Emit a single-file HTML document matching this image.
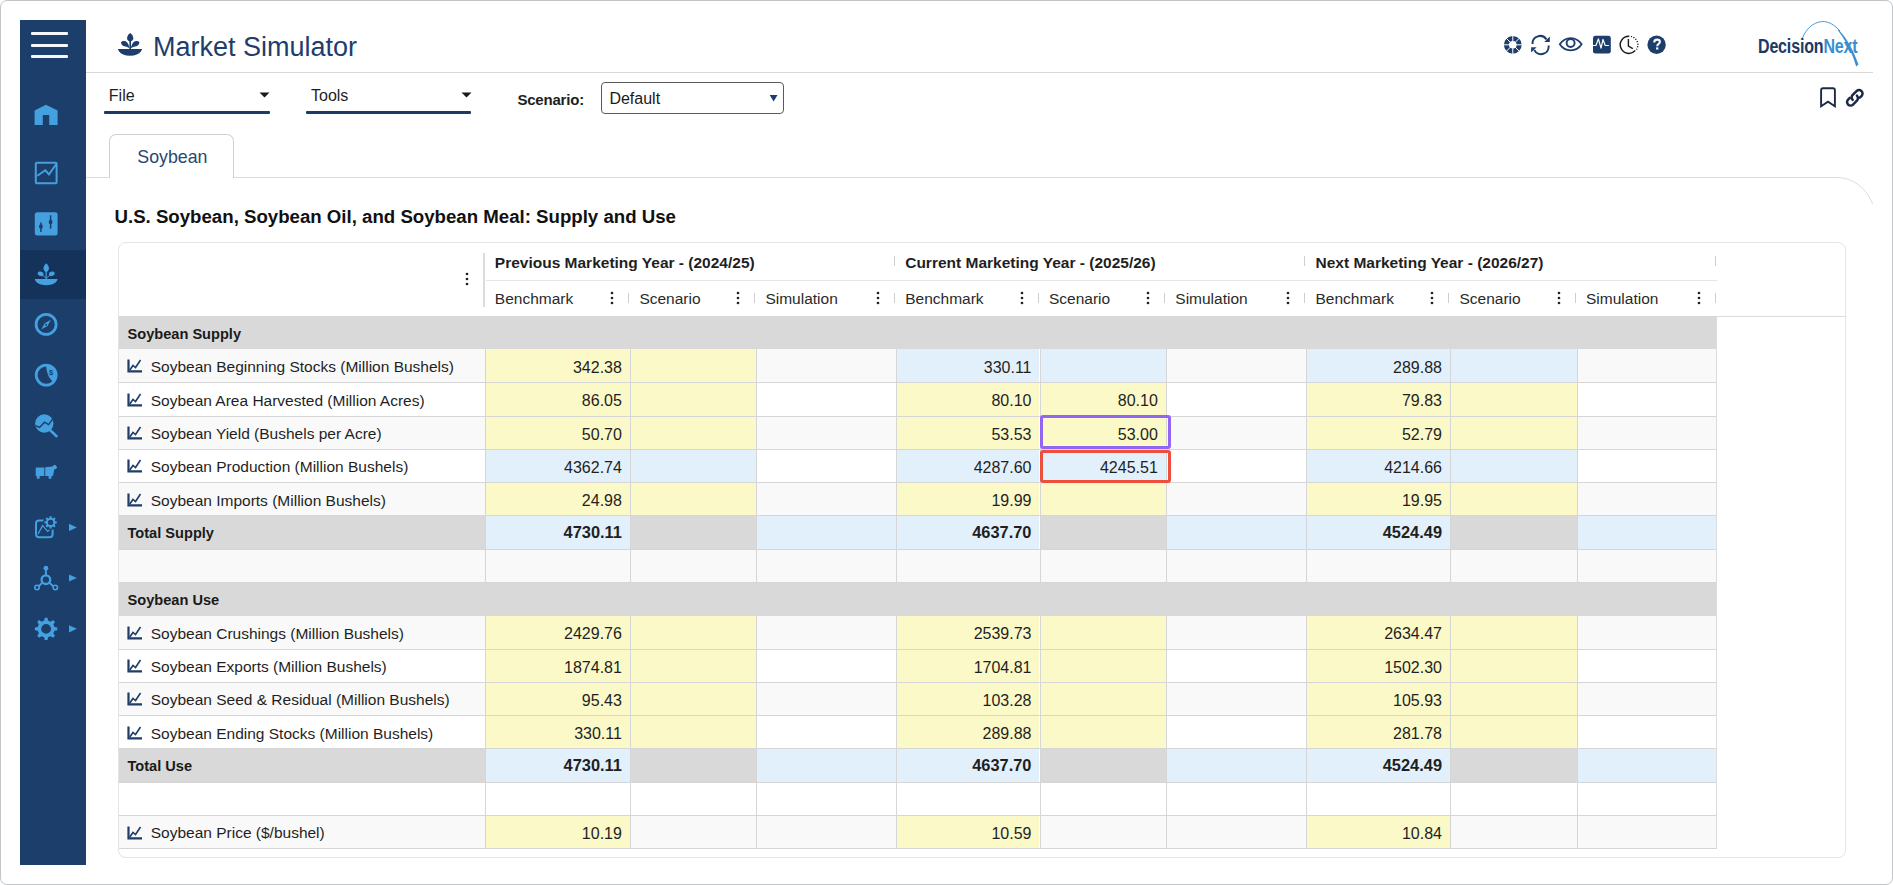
<!DOCTYPE html><html><head><meta charset="utf-8"><style>
*{box-sizing:border-box;margin:0;padding:0}
html,body{width:1893px;height:885px;overflow:hidden;background:#fff;font-family:"Liberation Sans", sans-serif;}
.a{position:absolute}
.t{position:absolute;white-space:nowrap;line-height:1}
.c{position:absolute;overflow:hidden}
</style></head><body><div class="a" style="left:0;top:0;width:1893px;height:885px;border:1px solid #c2c5c8;border-radius:7px"></div>
<div class="a" style="left:20px;top:20px;width:66px;height:845px;background:#1b3e6b"></div>
<div class="a" style="left:80px;top:20px;width:6px;height:845px;background:#1f3e68"></div>
<div class="a" style="left:30.5px;top:31.7px;width:37px;height:3px;background:#f3f7fb;border-radius:1px"></div>
<div class="a" style="left:30.5px;top:43.5px;width:37px;height:3px;background:#f3f7fb;border-radius:1px"></div>
<div class="a" style="left:30.5px;top:54.8px;width:37px;height:3px;background:#f3f7fb;border-radius:1px"></div>
<div class="a" style="left:20px;top:249.5px;width:66px;height:49px;background:#15325a"></div>
<svg class="a" style="left:112px;top:28px" width="36" height="32" viewBox="112 28 36 32">
<path fill="#1d3e6c" d="M117.8 48.9 H142.2 L141 51.3 C139 54.3 135.5 55.7 130 55.7 C124.5 55.7 121 54.3 119 51.3Z"/>
<path fill="#1d3e6c" d="M130.2 33.1 C132.4 34.6 133.3 36.6 133.3 38.3 C133.3 40.2 131.9 41.6 130.2 41.6 C128.5 41.6 127.1 40.2 127.1 38.3 C127.1 36.6 128 34.6 130.2 33.1Z"/>
<rect x="129.4" y="40.5" width="1.6" height="8.6" fill="#1d3e6c"/>
<path fill="#1d3e6c" d="M121 42.2 C122.3 40.8 125.2 40.6 127 42.3 C128 43.3 128.9 45.3 129.6 48.2 C127.6 46.8 125.6 46.5 124.2 46.2 C122.2 45.6 121.2 44.2 121 42.2Z"/>
<path fill="#1d3e6c" d="M139.4 42.2 C138.1 40.8 135.2 40.6 133.4 42.3 C132.4 43.3 131.5 45.3 130.8 48.2 C132.8 46.8 134.8 46.5 136.2 46.2 C138.2 45.6 139.2 44.2 139.4 42.2Z"/>
</svg>
<div class="t" style="left:153px;top:33.64px;font-size:27px;line-height:27px;color:#1d3e6c;font-weight:400;">Market Simulator</div>
<div class="a" style="left:86px;top:72px;width:1787px;height:1px;background:#d8d8d8"></div>
<svg class="a" style="left:1500px;top:33px" width="170" height="24" viewBox="1500 33 170 24">
<circle cx="1512.8" cy="44.8" r="6.35" fill="none" stroke="#1d3e6c" stroke-width="5.1"/>
<g stroke="#fff" stroke-width="1"><line x1="1522.80" y1="44.80" x2="1502.80" y2="44.80"/><line x1="1519.87" y1="51.87" x2="1505.73" y2="37.73"/><line x1="1512.80" y1="54.80" x2="1512.80" y2="34.80"/><line x1="1505.73" y1="51.87" x2="1519.87" y2="37.73"/></g>
<g fill="none" stroke="#1d3e6c" stroke-width="2" stroke-linecap="butt">
 <path d="M1532.5 44 A7.6 7.6 0 0 1 1546.5 39.5"/>
 <path d="M1548.6 45.5 A7.6 7.6 0 0 1 1534.3 50"/>
</g>
<path fill="#1d3e6c" d="M1549.8 36.6 V41.9 H1544.3 Z"/>
<path fill="#1d3e6c" d="M1531.1 52.6 V47.2 H1536.6 Z"/>
<path d="M1559.8 44.3 C1562.6 40 1566.4 38.1 1570.7 38.1 C1575 38.1 1578.8 40 1581.6 44.3 C1578.8 48.5 1575 50.4 1570.7 50.4 C1566.4 50.4 1562.6 48.5 1559.8 44.3Z" fill="none" stroke="#1d3e6c" stroke-width="1.8"/>
<circle cx="1570.6" cy="43" r="4" fill="none" stroke="#1d3e6c" stroke-width="1.9"/>
<rect x="1593" y="35.8" width="17.8" height="17.8" rx="2.4" fill="#1d3e6c"/>
<path d="M1593 45.5 H1595.9 L1598.4 38.9 L1601 48.2 L1603 39.4 L1605.2 45.5 H1608.9" fill="none" stroke="#fff" stroke-width="1.2" stroke-linejoin="round"/>
<path d="M1629.3 36.2 A8.6 8.6 0 1 0 1635.2 50.6" fill="none" stroke="#1c1c1c" stroke-width="1.5"/>
<path d="M1631 36.4 A8.6 8.6 0 0 1 1636.5 49.5" fill="none" stroke="#1c1c1c" stroke-width="1.4" stroke-dasharray="1.1 1.5"/>
<path d="M1628.4 39 V46.2 L1632.8 48.6" fill="none" stroke="#1c1c1c" stroke-width="1.4"/>
<circle cx="1656.6" cy="44.8" r="9.2" fill="#1d3e6c"/>
<path d="M1654.2 42.4 C1654.2 40.4 1655.4 39.6 1657.1 39.6 C1658.9 39.6 1659.9 40.6 1659.9 41.9 C1659.9 43.7 1657.2 44 1657.2 46.3" fill="none" stroke="#f4f8ff" stroke-width="2.1"/><rect x="1656" y="47.4" width="2.4" height="2.1" fill="#f4f8ff"/>
</svg>
<svg class="a" style="left:1750px;top:18px" width="115" height="52" viewBox="1750 18 115 52">
<path d="M1802.5 38 C1806 29 1813 22.5 1821.5 21.6 C1829 21 1835 25.5 1840 31" fill="none" stroke="#3b8fd0" stroke-width="0.9"/>
<path d="M1838 29 C1846 37 1852 48 1855.3 56.5 L1858.5 64.5 L1856.2 66.5 L1853.2 57.5 C1849.5 48 1844 38.5 1838.2 30.8Z" fill="#3b8fd0"/>
</svg>
<div class="t" style="left:1757.5px;top:36.2px;font-size:20.9px;line-height:20.9px;font-weight:700;transform:scaleX(0.765);transform-origin:0 0;letter-spacing:-0.2px"><span style="color:#1b3a66">Decision</span><span style="color:#3b8fd0">Next</span></div>
<div class="t" style="left:108.8px;top:88.46px;font-size:16px;line-height:16px;color:#1e1e1e;font-weight:400;">File</div>
<div class="a" style="left:104.3px;top:110.9px;width:165.7px;height:2.9px;background:#1c3a66;border-radius:1px"></div>
<svg class="a" style="left:259px;top:91px" width="12" height="8"><path d="M0.5 1.5 H10.5 L5.5 6.5Z" fill="#1a1a1a"/></svg>
<div class="t" style="left:311px;top:88.46px;font-size:16px;line-height:16px;color:#1e1e1e;font-weight:400;">Tools</div>
<div class="a" style="left:305.7px;top:110.9px;width:165.8px;height:2.9px;background:#1c3a66;border-radius:1px"></div>
<svg class="a" style="left:460.5px;top:91px" width="12" height="8"><path d="M0.5 1.5 H10.5 L5.5 6.5Z" fill="#1a1a1a"/></svg>
<div class="t" style="left:517.4px;top:91.70px;font-size:15px;line-height:15px;color:#1e1e1e;font-weight:700;letter-spacing:-0.2px">Scenario:</div>
<div class="a" style="left:601px;top:82.2px;width:183px;height:32.2px;border:1.3px solid #5a5a5a;border-radius:4px;background:#fff"></div>
<div class="t" style="left:609.4px;top:90.86px;font-size:16px;line-height:16px;color:#1a1a1a;font-weight:400;">Default</div>
<svg class="a" style="left:769px;top:94px" width="10" height="9"><path d="M0.7 1 H8.5 L4.6 7.6Z" fill="#1d3e6c"/></svg>
<svg class="a" style="left:1815px;top:84px" width="52" height="28" viewBox="1815 84 52 28">
<path d="M1821.1 106.3 V90.2 Q1821.1 88.2 1823.1 88.2 H1832.9 Q1834.9 88.2 1834.9 90.2 V106.3 L1828 101.6 Z" fill="none" stroke="#1c2a44" stroke-width="1.9" stroke-linejoin="miter"/>
<g transform="translate(1854.8 97.8) rotate(-45)" fill="none" stroke="#1c2a44" stroke-width="2.5" stroke-linecap="round">
<path d="M-3 0 A3.5 3.5 0 0 1 0.5 -3.5 L6 -3.5 A3.5 3.5 0 0 1 6 3.5 L3.6 3.5"/>
<path d="M3 0 A3.5 3.5 0 0 1 -0.5 3.5 L-6 3.5 A3.5 3.5 0 0 1 -6 -3.5 L-3.6 -3.5"/>
</g>
</svg>
<div class="a" style="left:86px;top:177px;width:1750px;height:1px;background:#dcdcdc"></div>
<svg class="a" style="left:1830px;top:176px" width="50" height="35" viewBox="1830 176 50 35"><path d="M1830 177.5 H1836 C1852 177.5 1866 187 1872.6 204" fill="none" stroke="#dcdcdc" stroke-width="1"/></svg>
<div class="a" style="left:108.5px;top:134px;width:125.5px;height:44px;border:1px solid #cdd1d4;border-bottom:none;border-radius:7px 7px 0 0;background:#fff"></div>
<div class="t" style="left:137.3px;top:148.53px;font-size:17.8px;line-height:17.8px;color:#2a4770;font-weight:400;">Soybean</div>
<div class="t" style="left:114.5px;top:207.91px;font-size:18.65px;line-height:18.65px;color:#111;font-weight:700;">U.S. Soybean, Soybean Oil, and Soybean Meal: Supply and Use</div>
<div class="a" style="left:117.5px;top:242px;width:1728px;height:616px;border:1px solid #e4e4e4;border-radius:8px;background:#fff"></div>
<div class="a" style="left:485.5px;top:280px;width:1231px;height:1px;background:#e6e6e6"></div>
<div class="a" style="left:118.5px;top:315.7px;width:1727px;height:1px;background:#dcdcdc"></div>
<div class="a" style="left:483px;top:252.5px;width:2.3px;height:54px;background:#dcdcdc"></div>
<svg class="a" style="left:465.3px;top:272.3px" width="4" height="14"><circle cx="2" cy="2" r="1.35" fill="#222"/><circle cx="2" cy="7" r="1.35" fill="#222"/><circle cx="2" cy="12" r="1.35" fill="#222"/></svg>
<div class="t" style="left:494.8px;top:254.78px;font-size:15.5px;line-height:15.5px;color:#1f1f1f;font-weight:700;">Previous Marketing Year - (2024/25)</div>
<div class="a" style="left:893.7px;top:256px;width:1px;height:10px;background:#cfcfcf"></div>
<div class="t" style="left:494.8px;top:291.38px;font-size:15.5px;line-height:15.5px;color:#2a2a2a;font-weight:400;">Benchmark</div>
<svg class="a" style="left:609.9px;top:290.5px" width="4" height="14"><circle cx="2" cy="2" r="1.35" fill="#222"/><circle cx="2" cy="7" r="1.35" fill="#222"/><circle cx="2" cy="12" r="1.35" fill="#222"/></svg>
<div class="a" style="left:627.9px;top:292.5px;width:1px;height:10.5px;background:#cfcfcf"></div>
<div class="t" style="left:639.4px;top:291.38px;font-size:15.5px;line-height:15.5px;color:#2a2a2a;font-weight:400;">Scenario</div>
<svg class="a" style="left:735.9px;top:290.5px" width="4" height="14"><circle cx="2" cy="2" r="1.35" fill="#222"/><circle cx="2" cy="7" r="1.35" fill="#222"/><circle cx="2" cy="12" r="1.35" fill="#222"/></svg>
<div class="a" style="left:753.9px;top:292.5px;width:1px;height:10.5px;background:#cfcfcf"></div>
<div class="t" style="left:765.4px;top:291.38px;font-size:15.5px;line-height:15.5px;color:#2a2a2a;font-weight:400;">Simulation</div>
<svg class="a" style="left:875.7px;top:290.5px" width="4" height="14"><circle cx="2" cy="2" r="1.35" fill="#222"/><circle cx="2" cy="7" r="1.35" fill="#222"/><circle cx="2" cy="12" r="1.35" fill="#222"/></svg>
<div class="a" style="left:893.7px;top:292.5px;width:1px;height:10.5px;background:#cfcfcf"></div>
<div class="t" style="left:905.2px;top:254.78px;font-size:15.5px;line-height:15.5px;color:#1f1f1f;font-weight:700;">Current Marketing Year - (2025/26)</div>
<div class="a" style="left:1304px;top:256px;width:1px;height:10px;background:#cfcfcf"></div>
<div class="t" style="left:905.2px;top:291.38px;font-size:15.5px;line-height:15.5px;color:#2a2a2a;font-weight:400;">Benchmark</div>
<svg class="a" style="left:1019.5px;top:290.5px" width="4" height="14"><circle cx="2" cy="2" r="1.35" fill="#222"/><circle cx="2" cy="7" r="1.35" fill="#222"/><circle cx="2" cy="12" r="1.35" fill="#222"/></svg>
<div class="a" style="left:1037.5px;top:292.5px;width:1px;height:10.5px;background:#cfcfcf"></div>
<div class="t" style="left:1049.0px;top:291.38px;font-size:15.5px;line-height:15.5px;color:#2a2a2a;font-weight:400;">Scenario</div>
<svg class="a" style="left:1145.8px;top:290.5px" width="4" height="14"><circle cx="2" cy="2" r="1.35" fill="#222"/><circle cx="2" cy="7" r="1.35" fill="#222"/><circle cx="2" cy="12" r="1.35" fill="#222"/></svg>
<div class="a" style="left:1163.8px;top:292.5px;width:1px;height:10.5px;background:#cfcfcf"></div>
<div class="t" style="left:1175.3px;top:291.38px;font-size:15.5px;line-height:15.5px;color:#2a2a2a;font-weight:400;">Simulation</div>
<svg class="a" style="left:1286px;top:290.5px" width="4" height="14"><circle cx="2" cy="2" r="1.35" fill="#222"/><circle cx="2" cy="7" r="1.35" fill="#222"/><circle cx="2" cy="12" r="1.35" fill="#222"/></svg>
<div class="a" style="left:1304px;top:292.5px;width:1px;height:10.5px;background:#cfcfcf"></div>
<div class="t" style="left:1315.5px;top:254.78px;font-size:15.5px;line-height:15.5px;color:#1f1f1f;font-weight:700;">Next Marketing Year - (2026/27)</div>
<div class="a" style="left:1714.5px;top:256px;width:1px;height:10px;background:#cfcfcf"></div>
<div class="t" style="left:1315.5px;top:291.38px;font-size:15.5px;line-height:15.5px;color:#2a2a2a;font-weight:400;">Benchmark</div>
<svg class="a" style="left:1430px;top:290.5px" width="4" height="14"><circle cx="2" cy="2" r="1.35" fill="#222"/><circle cx="2" cy="7" r="1.35" fill="#222"/><circle cx="2" cy="12" r="1.35" fill="#222"/></svg>
<div class="a" style="left:1448px;top:292.5px;width:1px;height:10.5px;background:#cfcfcf"></div>
<div class="t" style="left:1459.5px;top:291.38px;font-size:15.5px;line-height:15.5px;color:#2a2a2a;font-weight:400;">Scenario</div>
<svg class="a" style="left:1556.5px;top:290.5px" width="4" height="14"><circle cx="2" cy="2" r="1.35" fill="#222"/><circle cx="2" cy="7" r="1.35" fill="#222"/><circle cx="2" cy="12" r="1.35" fill="#222"/></svg>
<div class="a" style="left:1574.5px;top:292.5px;width:1px;height:10.5px;background:#cfcfcf"></div>
<div class="t" style="left:1586.0px;top:291.38px;font-size:15.5px;line-height:15.5px;color:#2a2a2a;font-weight:400;">Simulation</div>
<svg class="a" style="left:1696.5px;top:290.5px" width="4" height="14"><circle cx="2" cy="2" r="1.35" fill="#222"/><circle cx="2" cy="7" r="1.35" fill="#222"/><circle cx="2" cy="12" r="1.35" fill="#222"/></svg>
<div class="a" style="left:1714.5px;top:292.5px;width:1px;height:10.5px;background:#cfcfcf"></div>
<div class="a" style="left:118.5px;top:316.20px;width:1598.0px;height:33.29px;background:#d9d9d9"></div>
<div class="t" style="left:127.5px;top:327.04px;font-size:14.6px;line-height:14.6px;color:#1a1a1a;font-weight:700;">Soybean Supply</div>
<div class="a" style="left:118.5px;top:349.49px;width:366.8px;height:33.29px;background:#f9f9f9"></div>
<svg class="a" style="left:127px;top:359.49px" width="16" height="14" viewBox="0 0 16 14"><path d="M1.5 0.5 V12.4 H15" fill="none" stroke="#1f3d66" stroke-width="2.2"/><path d="M2.8 11 L6 6.5 L8.5 8.5 L13.5 1" fill="none" stroke="#1f3d66" stroke-width="1.6" stroke-linejoin="miter"/></svg>
<div class="t" style="left:150.7px;top:359.37px;font-size:15.5px;line-height:15.5px;color:#1f1f1f;font-weight:400;">Soybean Beginning Stocks (Million Bushels)</div>
<div class="a" style="left:485.3px;top:349.49px;width:144.6px;height:33.29px;background:#fbf9c7;border-left:1px solid #d6d6d6"></div>
<div class="t" style="left:485.3px;width:136.6px;text-align:right;top:359.95px;font-size:16px;line-height:16px;color:#1f1f1f;font-weight:400">342.38</div>
<div class="a" style="left:629.9px;top:349.49px;width:126.0px;height:33.29px;background:#fbf9c7;border-left:1px solid #d6d6d6"></div>
<div class="a" style="left:755.9px;top:349.49px;width:139.8px;height:33.29px;background:#f9f9f9;border-left:1px solid #d6d6d6"></div>
<div class="a" style="left:895.7px;top:349.49px;width:143.8px;height:33.29px;background:#e2f0fc;border-left:1px solid #d6d6d6"></div>
<div class="t" style="left:895.7px;width:135.8px;text-align:right;top:359.95px;font-size:16px;line-height:16px;color:#1f1f1f;font-weight:400">330.11</div>
<div class="a" style="left:1039.5px;top:349.49px;width:126.3px;height:33.29px;background:#e2f0fc;border-left:1px solid #d6d6d6"></div>
<div class="a" style="left:1165.8px;top:349.49px;width:140.2px;height:33.29px;background:#f9f9f9;border-left:1px solid #d6d6d6"></div>
<div class="a" style="left:1306.0px;top:349.49px;width:144.0px;height:33.29px;background:#e2f0fc;border-left:1px solid #d6d6d6"></div>
<div class="t" style="left:1306px;width:136.0px;text-align:right;top:359.95px;font-size:16px;line-height:16px;color:#1f1f1f;font-weight:400">289.88</div>
<div class="a" style="left:1450.0px;top:349.49px;width:126.5px;height:33.29px;background:#e2f0fc;border-left:1px solid #d6d6d6"></div>
<div class="a" style="left:1576.5px;top:349.49px;width:140.0px;height:33.29px;background:#f9f9f9;border-left:1px solid #d6d6d6"></div>
<div class="a" style="left:118.5px;top:382.78px;width:366.8px;height:33.29px;background:#ffffff"></div>
<svg class="a" style="left:127px;top:392.78px" width="16" height="14" viewBox="0 0 16 14"><path d="M1.5 0.5 V12.4 H15" fill="none" stroke="#1f3d66" stroke-width="2.2"/><path d="M2.8 11 L6 6.5 L8.5 8.5 L13.5 1" fill="none" stroke="#1f3d66" stroke-width="1.6" stroke-linejoin="miter"/></svg>
<div class="t" style="left:150.7px;top:392.66px;font-size:15.5px;line-height:15.5px;color:#1f1f1f;font-weight:400;">Soybean Area Harvested (Million Acres)</div>
<div class="a" style="left:485.3px;top:382.78px;width:144.6px;height:33.29px;background:#fbf9c7;border-left:1px solid #d6d6d6"></div>
<div class="t" style="left:485.3px;width:136.6px;text-align:right;top:393.24px;font-size:16px;line-height:16px;color:#1f1f1f;font-weight:400">86.05</div>
<div class="a" style="left:629.9px;top:382.78px;width:126.0px;height:33.29px;background:#fbf9c7;border-left:1px solid #d6d6d6"></div>
<div class="a" style="left:755.9px;top:382.78px;width:139.8px;height:33.29px;background:#ffffff;border-left:1px solid #d6d6d6"></div>
<div class="a" style="left:895.7px;top:382.78px;width:143.8px;height:33.29px;background:#fbf9c7;border-left:1px solid #d6d6d6"></div>
<div class="t" style="left:895.7px;width:135.8px;text-align:right;top:393.24px;font-size:16px;line-height:16px;color:#1f1f1f;font-weight:400">80.10</div>
<div class="a" style="left:1039.5px;top:382.78px;width:126.3px;height:33.29px;background:#fbf9c7;border-left:1px solid #d6d6d6"></div>
<div class="t" style="left:1039.5px;width:118.3px;text-align:right;top:393.24px;font-size:16px;line-height:16px;color:#1f1f1f;font-weight:400">80.10</div>
<div class="a" style="left:1165.8px;top:382.78px;width:140.2px;height:33.29px;background:#ffffff;border-left:1px solid #d6d6d6"></div>
<div class="a" style="left:1306.0px;top:382.78px;width:144.0px;height:33.29px;background:#fbf9c7;border-left:1px solid #d6d6d6"></div>
<div class="t" style="left:1306px;width:136.0px;text-align:right;top:393.24px;font-size:16px;line-height:16px;color:#1f1f1f;font-weight:400">79.83</div>
<div class="a" style="left:1450.0px;top:382.78px;width:126.5px;height:33.29px;background:#fbf9c7;border-left:1px solid #d6d6d6"></div>
<div class="a" style="left:1576.5px;top:382.78px;width:140.0px;height:33.29px;background:#ffffff;border-left:1px solid #d6d6d6"></div>
<div class="a" style="left:118.5px;top:416.07px;width:366.8px;height:33.29px;background:#f9f9f9"></div>
<svg class="a" style="left:127px;top:426.07px" width="16" height="14" viewBox="0 0 16 14"><path d="M1.5 0.5 V12.4 H15" fill="none" stroke="#1f3d66" stroke-width="2.2"/><path d="M2.8 11 L6 6.5 L8.5 8.5 L13.5 1" fill="none" stroke="#1f3d66" stroke-width="1.6" stroke-linejoin="miter"/></svg>
<div class="t" style="left:150.7px;top:425.95px;font-size:15.5px;line-height:15.5px;color:#1f1f1f;font-weight:400;">Soybean Yield (Bushels per Acre)</div>
<div class="a" style="left:485.3px;top:416.07px;width:144.6px;height:33.29px;background:#fbf9c7;border-left:1px solid #d6d6d6"></div>
<div class="t" style="left:485.3px;width:136.6px;text-align:right;top:426.53px;font-size:16px;line-height:16px;color:#1f1f1f;font-weight:400">50.70</div>
<div class="a" style="left:629.9px;top:416.07px;width:126.0px;height:33.29px;background:#fbf9c7;border-left:1px solid #d6d6d6"></div>
<div class="a" style="left:755.9px;top:416.07px;width:139.8px;height:33.29px;background:#f9f9f9;border-left:1px solid #d6d6d6"></div>
<div class="a" style="left:895.7px;top:416.07px;width:143.8px;height:33.29px;background:#fbf9c7;border-left:1px solid #d6d6d6"></div>
<div class="t" style="left:895.7px;width:135.8px;text-align:right;top:426.53px;font-size:16px;line-height:16px;color:#1f1f1f;font-weight:400">53.53</div>
<div class="a" style="left:1039.5px;top:416.07px;width:126.3px;height:33.29px;background:#fbf9c7;border-left:1px solid #d6d6d6"></div>
<div class="t" style="left:1039.5px;width:118.3px;text-align:right;top:426.53px;font-size:16px;line-height:16px;color:#1f1f1f;font-weight:400">53.00</div>
<div class="a" style="left:1165.8px;top:416.07px;width:140.2px;height:33.29px;background:#f9f9f9;border-left:1px solid #d6d6d6"></div>
<div class="a" style="left:1306.0px;top:416.07px;width:144.0px;height:33.29px;background:#fbf9c7;border-left:1px solid #d6d6d6"></div>
<div class="t" style="left:1306px;width:136.0px;text-align:right;top:426.53px;font-size:16px;line-height:16px;color:#1f1f1f;font-weight:400">52.79</div>
<div class="a" style="left:1450.0px;top:416.07px;width:126.5px;height:33.29px;background:#fbf9c7;border-left:1px solid #d6d6d6"></div>
<div class="a" style="left:1576.5px;top:416.07px;width:140.0px;height:33.29px;background:#f9f9f9;border-left:1px solid #d6d6d6"></div>
<div class="a" style="left:118.5px;top:449.36px;width:366.8px;height:33.29px;background:#ffffff"></div>
<svg class="a" style="left:127px;top:459.36px" width="16" height="14" viewBox="0 0 16 14"><path d="M1.5 0.5 V12.4 H15" fill="none" stroke="#1f3d66" stroke-width="2.2"/><path d="M2.8 11 L6 6.5 L8.5 8.5 L13.5 1" fill="none" stroke="#1f3d66" stroke-width="1.6" stroke-linejoin="miter"/></svg>
<div class="t" style="left:150.7px;top:459.24px;font-size:15.5px;line-height:15.5px;color:#1f1f1f;font-weight:400;">Soybean Production (Million Bushels)</div>
<div class="a" style="left:485.3px;top:449.36px;width:144.6px;height:33.29px;background:#e2f0fc;border-left:1px solid #d6d6d6"></div>
<div class="t" style="left:485.3px;width:136.6px;text-align:right;top:459.82px;font-size:16px;line-height:16px;color:#1f1f1f;font-weight:400">4362.74</div>
<div class="a" style="left:629.9px;top:449.36px;width:126.0px;height:33.29px;background:#e2f0fc;border-left:1px solid #d6d6d6"></div>
<div class="a" style="left:755.9px;top:449.36px;width:139.8px;height:33.29px;background:#ffffff;border-left:1px solid #d6d6d6"></div>
<div class="a" style="left:895.7px;top:449.36px;width:143.8px;height:33.29px;background:#e2f0fc;border-left:1px solid #d6d6d6"></div>
<div class="t" style="left:895.7px;width:135.8px;text-align:right;top:459.82px;font-size:16px;line-height:16px;color:#1f1f1f;font-weight:400">4287.60</div>
<div class="a" style="left:1039.5px;top:449.36px;width:126.3px;height:33.29px;background:#e2f0fc;border-left:1px solid #d6d6d6"></div>
<div class="t" style="left:1039.5px;width:118.3px;text-align:right;top:459.82px;font-size:16px;line-height:16px;color:#1f1f1f;font-weight:400">4245.51</div>
<div class="a" style="left:1165.8px;top:449.36px;width:140.2px;height:33.29px;background:#ffffff;border-left:1px solid #d6d6d6"></div>
<div class="a" style="left:1306.0px;top:449.36px;width:144.0px;height:33.29px;background:#e2f0fc;border-left:1px solid #d6d6d6"></div>
<div class="t" style="left:1306px;width:136.0px;text-align:right;top:459.82px;font-size:16px;line-height:16px;color:#1f1f1f;font-weight:400">4214.66</div>
<div class="a" style="left:1450.0px;top:449.36px;width:126.5px;height:33.29px;background:#e2f0fc;border-left:1px solid #d6d6d6"></div>
<div class="a" style="left:1576.5px;top:449.36px;width:140.0px;height:33.29px;background:#ffffff;border-left:1px solid #d6d6d6"></div>
<div class="a" style="left:118.5px;top:482.65px;width:366.8px;height:33.29px;background:#f9f9f9"></div>
<svg class="a" style="left:127px;top:492.65px" width="16" height="14" viewBox="0 0 16 14"><path d="M1.5 0.5 V12.4 H15" fill="none" stroke="#1f3d66" stroke-width="2.2"/><path d="M2.8 11 L6 6.5 L8.5 8.5 L13.5 1" fill="none" stroke="#1f3d66" stroke-width="1.6" stroke-linejoin="miter"/></svg>
<div class="t" style="left:150.7px;top:492.53px;font-size:15.5px;line-height:15.5px;color:#1f1f1f;font-weight:400;">Soybean Imports (Million Bushels)</div>
<div class="a" style="left:485.3px;top:482.65px;width:144.6px;height:33.29px;background:#fbf9c7;border-left:1px solid #d6d6d6"></div>
<div class="t" style="left:485.3px;width:136.6px;text-align:right;top:493.11px;font-size:16px;line-height:16px;color:#1f1f1f;font-weight:400">24.98</div>
<div class="a" style="left:629.9px;top:482.65px;width:126.0px;height:33.29px;background:#fbf9c7;border-left:1px solid #d6d6d6"></div>
<div class="a" style="left:755.9px;top:482.65px;width:139.8px;height:33.29px;background:#f9f9f9;border-left:1px solid #d6d6d6"></div>
<div class="a" style="left:895.7px;top:482.65px;width:143.8px;height:33.29px;background:#fbf9c7;border-left:1px solid #d6d6d6"></div>
<div class="t" style="left:895.7px;width:135.8px;text-align:right;top:493.11px;font-size:16px;line-height:16px;color:#1f1f1f;font-weight:400">19.99</div>
<div class="a" style="left:1039.5px;top:482.65px;width:126.3px;height:33.29px;background:#fbf9c7;border-left:1px solid #d6d6d6"></div>
<div class="a" style="left:1165.8px;top:482.65px;width:140.2px;height:33.29px;background:#f9f9f9;border-left:1px solid #d6d6d6"></div>
<div class="a" style="left:1306.0px;top:482.65px;width:144.0px;height:33.29px;background:#fbf9c7;border-left:1px solid #d6d6d6"></div>
<div class="t" style="left:1306px;width:136.0px;text-align:right;top:493.11px;font-size:16px;line-height:16px;color:#1f1f1f;font-weight:400">19.95</div>
<div class="a" style="left:1450.0px;top:482.65px;width:126.5px;height:33.29px;background:#fbf9c7;border-left:1px solid #d6d6d6"></div>
<div class="a" style="left:1576.5px;top:482.65px;width:140.0px;height:33.29px;background:#f9f9f9;border-left:1px solid #d6d6d6"></div>
<div class="a" style="left:118.5px;top:515.94px;width:366.8px;height:33.29px;background:#d9d9d9"></div>
<div class="t" style="left:127.5px;top:526.08px;font-size:14.6px;line-height:14.6px;color:#1a1a1a;font-weight:700;">Total Supply</div>
<div class="a" style="left:485.3px;top:515.94px;width:144.6px;height:33.29px;background:#e2f0fc;border-left:1px solid #d6d6d6"></div>
<div class="t" style="left:485.3px;width:136.6px;text-align:right;top:523.56px;font-size:16.4px;line-height:16.4px;color:#1f1f1f;font-weight:700">4730.11</div>
<div class="a" style="left:629.9px;top:515.94px;width:126.0px;height:33.29px;background:#d9d9d9;border-left:1px solid #d6d6d6"></div>
<div class="a" style="left:755.9px;top:515.94px;width:139.8px;height:33.29px;background:#e2f0fc;border-left:1px solid #d6d6d6"></div>
<div class="a" style="left:895.7px;top:515.94px;width:143.8px;height:33.29px;background:#e2f0fc;border-left:1px solid #d6d6d6"></div>
<div class="t" style="left:895.7px;width:135.8px;text-align:right;top:523.56px;font-size:16.4px;line-height:16.4px;color:#1f1f1f;font-weight:700">4637.70</div>
<div class="a" style="left:1039.5px;top:515.94px;width:126.3px;height:33.29px;background:#d9d9d9;border-left:1px solid #d6d6d6"></div>
<div class="a" style="left:1165.8px;top:515.94px;width:140.2px;height:33.29px;background:#e2f0fc;border-left:1px solid #d6d6d6"></div>
<div class="a" style="left:1306.0px;top:515.94px;width:144.0px;height:33.29px;background:#e2f0fc;border-left:1px solid #d6d6d6"></div>
<div class="t" style="left:1306px;width:136.0px;text-align:right;top:523.56px;font-size:16.4px;line-height:16.4px;color:#1f1f1f;font-weight:700">4524.49</div>
<div class="a" style="left:1450.0px;top:515.94px;width:126.5px;height:33.29px;background:#d9d9d9;border-left:1px solid #d6d6d6"></div>
<div class="a" style="left:1576.5px;top:515.94px;width:140.0px;height:33.29px;background:#e2f0fc;border-left:1px solid #d6d6d6"></div>
<div class="a" style="left:118.5px;top:549.23px;width:1598.0px;height:33.29px;background:#f9f9f9"></div>
<div class="a" style="left:485.3px;top:549.23px;width:1px;height:33.29px;background:#d6d6d6"></div>
<div class="a" style="left:629.9px;top:549.23px;width:1px;height:33.29px;background:#d6d6d6"></div>
<div class="a" style="left:755.9px;top:549.23px;width:1px;height:33.29px;background:#d6d6d6"></div>
<div class="a" style="left:895.7px;top:549.23px;width:1px;height:33.29px;background:#d6d6d6"></div>
<div class="a" style="left:1039.5px;top:549.23px;width:1px;height:33.29px;background:#d6d6d6"></div>
<div class="a" style="left:1165.8px;top:549.23px;width:1px;height:33.29px;background:#d6d6d6"></div>
<div class="a" style="left:1306.0px;top:549.23px;width:1px;height:33.29px;background:#d6d6d6"></div>
<div class="a" style="left:1450.0px;top:549.23px;width:1px;height:33.29px;background:#d6d6d6"></div>
<div class="a" style="left:1576.5px;top:549.23px;width:1px;height:33.29px;background:#d6d6d6"></div>
<div class="a" style="left:118.5px;top:582.52px;width:1598.0px;height:33.29px;background:#d9d9d9"></div>
<div class="t" style="left:127.5px;top:593.36px;font-size:14.6px;line-height:14.6px;color:#1a1a1a;font-weight:700;">Soybean Use</div>
<div class="a" style="left:118.5px;top:615.81px;width:366.8px;height:33.29px;background:#f9f9f9"></div>
<svg class="a" style="left:127px;top:625.81px" width="16" height="14" viewBox="0 0 16 14"><path d="M1.5 0.5 V12.4 H15" fill="none" stroke="#1f3d66" stroke-width="2.2"/><path d="M2.8 11 L6 6.5 L8.5 8.5 L13.5 1" fill="none" stroke="#1f3d66" stroke-width="1.6" stroke-linejoin="miter"/></svg>
<div class="t" style="left:150.7px;top:625.69px;font-size:15.5px;line-height:15.5px;color:#1f1f1f;font-weight:400;">Soybean Crushings (Million Bushels)</div>
<div class="a" style="left:485.3px;top:615.81px;width:144.6px;height:33.29px;background:#fbf9c7;border-left:1px solid #d6d6d6"></div>
<div class="t" style="left:485.3px;width:136.6px;text-align:right;top:626.27px;font-size:16px;line-height:16px;color:#1f1f1f;font-weight:400">2429.76</div>
<div class="a" style="left:629.9px;top:615.81px;width:126.0px;height:33.29px;background:#fbf9c7;border-left:1px solid #d6d6d6"></div>
<div class="a" style="left:755.9px;top:615.81px;width:139.8px;height:33.29px;background:#f9f9f9;border-left:1px solid #d6d6d6"></div>
<div class="a" style="left:895.7px;top:615.81px;width:143.8px;height:33.29px;background:#fbf9c7;border-left:1px solid #d6d6d6"></div>
<div class="t" style="left:895.7px;width:135.8px;text-align:right;top:626.27px;font-size:16px;line-height:16px;color:#1f1f1f;font-weight:400">2539.73</div>
<div class="a" style="left:1039.5px;top:615.81px;width:126.3px;height:33.29px;background:#fbf9c7;border-left:1px solid #d6d6d6"></div>
<div class="a" style="left:1165.8px;top:615.81px;width:140.2px;height:33.29px;background:#f9f9f9;border-left:1px solid #d6d6d6"></div>
<div class="a" style="left:1306.0px;top:615.81px;width:144.0px;height:33.29px;background:#fbf9c7;border-left:1px solid #d6d6d6"></div>
<div class="t" style="left:1306px;width:136.0px;text-align:right;top:626.27px;font-size:16px;line-height:16px;color:#1f1f1f;font-weight:400">2634.47</div>
<div class="a" style="left:1450.0px;top:615.81px;width:126.5px;height:33.29px;background:#fbf9c7;border-left:1px solid #d6d6d6"></div>
<div class="a" style="left:1576.5px;top:615.81px;width:140.0px;height:33.29px;background:#f9f9f9;border-left:1px solid #d6d6d6"></div>
<div class="a" style="left:118.5px;top:649.10px;width:366.8px;height:33.29px;background:#ffffff"></div>
<svg class="a" style="left:127px;top:659.0999999999999px" width="16" height="14" viewBox="0 0 16 14"><path d="M1.5 0.5 V12.4 H15" fill="none" stroke="#1f3d66" stroke-width="2.2"/><path d="M2.8 11 L6 6.5 L8.5 8.5 L13.5 1" fill="none" stroke="#1f3d66" stroke-width="1.6" stroke-linejoin="miter"/></svg>
<div class="t" style="left:150.7px;top:658.98px;font-size:15.5px;line-height:15.5px;color:#1f1f1f;font-weight:400;">Soybean Exports (Million Bushels)</div>
<div class="a" style="left:485.3px;top:649.10px;width:144.6px;height:33.29px;background:#fbf9c7;border-left:1px solid #d6d6d6"></div>
<div class="t" style="left:485.3px;width:136.6px;text-align:right;top:659.56px;font-size:16px;line-height:16px;color:#1f1f1f;font-weight:400">1874.81</div>
<div class="a" style="left:629.9px;top:649.10px;width:126.0px;height:33.29px;background:#fbf9c7;border-left:1px solid #d6d6d6"></div>
<div class="a" style="left:755.9px;top:649.10px;width:139.8px;height:33.29px;background:#ffffff;border-left:1px solid #d6d6d6"></div>
<div class="a" style="left:895.7px;top:649.10px;width:143.8px;height:33.29px;background:#fbf9c7;border-left:1px solid #d6d6d6"></div>
<div class="t" style="left:895.7px;width:135.8px;text-align:right;top:659.56px;font-size:16px;line-height:16px;color:#1f1f1f;font-weight:400">1704.81</div>
<div class="a" style="left:1039.5px;top:649.10px;width:126.3px;height:33.29px;background:#fbf9c7;border-left:1px solid #d6d6d6"></div>
<div class="a" style="left:1165.8px;top:649.10px;width:140.2px;height:33.29px;background:#ffffff;border-left:1px solid #d6d6d6"></div>
<div class="a" style="left:1306.0px;top:649.10px;width:144.0px;height:33.29px;background:#fbf9c7;border-left:1px solid #d6d6d6"></div>
<div class="t" style="left:1306px;width:136.0px;text-align:right;top:659.56px;font-size:16px;line-height:16px;color:#1f1f1f;font-weight:400">1502.30</div>
<div class="a" style="left:1450.0px;top:649.10px;width:126.5px;height:33.29px;background:#fbf9c7;border-left:1px solid #d6d6d6"></div>
<div class="a" style="left:1576.5px;top:649.10px;width:140.0px;height:33.29px;background:#ffffff;border-left:1px solid #d6d6d6"></div>
<div class="a" style="left:118.5px;top:682.39px;width:366.8px;height:33.29px;background:#f9f9f9"></div>
<svg class="a" style="left:127px;top:692.39px" width="16" height="14" viewBox="0 0 16 14"><path d="M1.5 0.5 V12.4 H15" fill="none" stroke="#1f3d66" stroke-width="2.2"/><path d="M2.8 11 L6 6.5 L8.5 8.5 L13.5 1" fill="none" stroke="#1f3d66" stroke-width="1.6" stroke-linejoin="miter"/></svg>
<div class="t" style="left:150.7px;top:692.27px;font-size:15.5px;line-height:15.5px;color:#1f1f1f;font-weight:400;">Soybean Seed &amp; Residual (Million Bushels)</div>
<div class="a" style="left:485.3px;top:682.39px;width:144.6px;height:33.29px;background:#fbf9c7;border-left:1px solid #d6d6d6"></div>
<div class="t" style="left:485.3px;width:136.6px;text-align:right;top:692.85px;font-size:16px;line-height:16px;color:#1f1f1f;font-weight:400">95.43</div>
<div class="a" style="left:629.9px;top:682.39px;width:126.0px;height:33.29px;background:#fbf9c7;border-left:1px solid #d6d6d6"></div>
<div class="a" style="left:755.9px;top:682.39px;width:139.8px;height:33.29px;background:#f9f9f9;border-left:1px solid #d6d6d6"></div>
<div class="a" style="left:895.7px;top:682.39px;width:143.8px;height:33.29px;background:#fbf9c7;border-left:1px solid #d6d6d6"></div>
<div class="t" style="left:895.7px;width:135.8px;text-align:right;top:692.85px;font-size:16px;line-height:16px;color:#1f1f1f;font-weight:400">103.28</div>
<div class="a" style="left:1039.5px;top:682.39px;width:126.3px;height:33.29px;background:#fbf9c7;border-left:1px solid #d6d6d6"></div>
<div class="a" style="left:1165.8px;top:682.39px;width:140.2px;height:33.29px;background:#f9f9f9;border-left:1px solid #d6d6d6"></div>
<div class="a" style="left:1306.0px;top:682.39px;width:144.0px;height:33.29px;background:#fbf9c7;border-left:1px solid #d6d6d6"></div>
<div class="t" style="left:1306px;width:136.0px;text-align:right;top:692.85px;font-size:16px;line-height:16px;color:#1f1f1f;font-weight:400">105.93</div>
<div class="a" style="left:1450.0px;top:682.39px;width:126.5px;height:33.29px;background:#fbf9c7;border-left:1px solid #d6d6d6"></div>
<div class="a" style="left:1576.5px;top:682.39px;width:140.0px;height:33.29px;background:#f9f9f9;border-left:1px solid #d6d6d6"></div>
<div class="a" style="left:118.5px;top:715.68px;width:366.8px;height:33.29px;background:#ffffff"></div>
<svg class="a" style="left:127px;top:725.6800000000001px" width="16" height="14" viewBox="0 0 16 14"><path d="M1.5 0.5 V12.4 H15" fill="none" stroke="#1f3d66" stroke-width="2.2"/><path d="M2.8 11 L6 6.5 L8.5 8.5 L13.5 1" fill="none" stroke="#1f3d66" stroke-width="1.6" stroke-linejoin="miter"/></svg>
<div class="t" style="left:150.7px;top:725.56px;font-size:15.5px;line-height:15.5px;color:#1f1f1f;font-weight:400;">Soybean Ending Stocks (Million Bushels)</div>
<div class="a" style="left:485.3px;top:715.68px;width:144.6px;height:33.29px;background:#fbf9c7;border-left:1px solid #d6d6d6"></div>
<div class="t" style="left:485.3px;width:136.6px;text-align:right;top:726.14px;font-size:16px;line-height:16px;color:#1f1f1f;font-weight:400">330.11</div>
<div class="a" style="left:629.9px;top:715.68px;width:126.0px;height:33.29px;background:#fbf9c7;border-left:1px solid #d6d6d6"></div>
<div class="a" style="left:755.9px;top:715.68px;width:139.8px;height:33.29px;background:#ffffff;border-left:1px solid #d6d6d6"></div>
<div class="a" style="left:895.7px;top:715.68px;width:143.8px;height:33.29px;background:#fbf9c7;border-left:1px solid #d6d6d6"></div>
<div class="t" style="left:895.7px;width:135.8px;text-align:right;top:726.14px;font-size:16px;line-height:16px;color:#1f1f1f;font-weight:400">289.88</div>
<div class="a" style="left:1039.5px;top:715.68px;width:126.3px;height:33.29px;background:#fbf9c7;border-left:1px solid #d6d6d6"></div>
<div class="a" style="left:1165.8px;top:715.68px;width:140.2px;height:33.29px;background:#ffffff;border-left:1px solid #d6d6d6"></div>
<div class="a" style="left:1306.0px;top:715.68px;width:144.0px;height:33.29px;background:#fbf9c7;border-left:1px solid #d6d6d6"></div>
<div class="t" style="left:1306px;width:136.0px;text-align:right;top:726.14px;font-size:16px;line-height:16px;color:#1f1f1f;font-weight:400">281.78</div>
<div class="a" style="left:1450.0px;top:715.68px;width:126.5px;height:33.29px;background:#fbf9c7;border-left:1px solid #d6d6d6"></div>
<div class="a" style="left:1576.5px;top:715.68px;width:140.0px;height:33.29px;background:#ffffff;border-left:1px solid #d6d6d6"></div>
<div class="a" style="left:118.5px;top:748.97px;width:366.8px;height:33.29px;background:#d9d9d9"></div>
<div class="t" style="left:127.5px;top:759.11px;font-size:14.6px;line-height:14.6px;color:#1a1a1a;font-weight:700;">Total Use</div>
<div class="a" style="left:485.3px;top:748.97px;width:144.6px;height:33.29px;background:#e2f0fc;border-left:1px solid #d6d6d6"></div>
<div class="t" style="left:485.3px;width:136.6px;text-align:right;top:756.59px;font-size:16.4px;line-height:16.4px;color:#1f1f1f;font-weight:700">4730.11</div>
<div class="a" style="left:629.9px;top:748.97px;width:126.0px;height:33.29px;background:#d9d9d9;border-left:1px solid #d6d6d6"></div>
<div class="a" style="left:755.9px;top:748.97px;width:139.8px;height:33.29px;background:#e2f0fc;border-left:1px solid #d6d6d6"></div>
<div class="a" style="left:895.7px;top:748.97px;width:143.8px;height:33.29px;background:#e2f0fc;border-left:1px solid #d6d6d6"></div>
<div class="t" style="left:895.7px;width:135.8px;text-align:right;top:756.59px;font-size:16.4px;line-height:16.4px;color:#1f1f1f;font-weight:700">4637.70</div>
<div class="a" style="left:1039.5px;top:748.97px;width:126.3px;height:33.29px;background:#d9d9d9;border-left:1px solid #d6d6d6"></div>
<div class="a" style="left:1165.8px;top:748.97px;width:140.2px;height:33.29px;background:#e2f0fc;border-left:1px solid #d6d6d6"></div>
<div class="a" style="left:1306.0px;top:748.97px;width:144.0px;height:33.29px;background:#e2f0fc;border-left:1px solid #d6d6d6"></div>
<div class="t" style="left:1306px;width:136.0px;text-align:right;top:756.59px;font-size:16.4px;line-height:16.4px;color:#1f1f1f;font-weight:700">4524.49</div>
<div class="a" style="left:1450.0px;top:748.97px;width:126.5px;height:33.29px;background:#d9d9d9;border-left:1px solid #d6d6d6"></div>
<div class="a" style="left:1576.5px;top:748.97px;width:140.0px;height:33.29px;background:#e2f0fc;border-left:1px solid #d6d6d6"></div>
<div class="a" style="left:118.5px;top:782.26px;width:1598.0px;height:33.29px;background:#ffffff"></div>
<div class="a" style="left:485.3px;top:782.26px;width:1px;height:33.29px;background:#d6d6d6"></div>
<div class="a" style="left:629.9px;top:782.26px;width:1px;height:33.29px;background:#d6d6d6"></div>
<div class="a" style="left:755.9px;top:782.26px;width:1px;height:33.29px;background:#d6d6d6"></div>
<div class="a" style="left:895.7px;top:782.26px;width:1px;height:33.29px;background:#d6d6d6"></div>
<div class="a" style="left:1039.5px;top:782.26px;width:1px;height:33.29px;background:#d6d6d6"></div>
<div class="a" style="left:1165.8px;top:782.26px;width:1px;height:33.29px;background:#d6d6d6"></div>
<div class="a" style="left:1306.0px;top:782.26px;width:1px;height:33.29px;background:#d6d6d6"></div>
<div class="a" style="left:1450.0px;top:782.26px;width:1px;height:33.29px;background:#d6d6d6"></div>
<div class="a" style="left:1576.5px;top:782.26px;width:1px;height:33.29px;background:#d6d6d6"></div>
<div class="a" style="left:118.5px;top:815.55px;width:366.8px;height:33.29px;background:#f9f9f9"></div>
<svg class="a" style="left:127px;top:825.55px" width="16" height="14" viewBox="0 0 16 14"><path d="M1.5 0.5 V12.4 H15" fill="none" stroke="#1f3d66" stroke-width="2.2"/><path d="M2.8 11 L6 6.5 L8.5 8.5 L13.5 1" fill="none" stroke="#1f3d66" stroke-width="1.6" stroke-linejoin="miter"/></svg>
<div class="t" style="left:150.7px;top:825.43px;font-size:15.5px;line-height:15.5px;color:#1f1f1f;font-weight:400;">Soybean Price ($/bushel)</div>
<div class="a" style="left:485.3px;top:815.55px;width:144.6px;height:33.29px;background:#fbf9c7;border-left:1px solid #d6d6d6"></div>
<div class="t" style="left:485.3px;width:136.6px;text-align:right;top:826.01px;font-size:16px;line-height:16px;color:#1f1f1f;font-weight:400">10.19</div>
<div class="a" style="left:629.9px;top:815.55px;width:126.0px;height:33.29px;background:#f9f9f9;border-left:1px solid #d6d6d6"></div>
<div class="a" style="left:755.9px;top:815.55px;width:139.8px;height:33.29px;background:#f9f9f9;border-left:1px solid #d6d6d6"></div>
<div class="a" style="left:895.7px;top:815.55px;width:143.8px;height:33.29px;background:#fbf9c7;border-left:1px solid #d6d6d6"></div>
<div class="t" style="left:895.7px;width:135.8px;text-align:right;top:826.01px;font-size:16px;line-height:16px;color:#1f1f1f;font-weight:400">10.59</div>
<div class="a" style="left:1039.5px;top:815.55px;width:126.3px;height:33.29px;background:#f9f9f9;border-left:1px solid #d6d6d6"></div>
<div class="a" style="left:1165.8px;top:815.55px;width:140.2px;height:33.29px;background:#f9f9f9;border-left:1px solid #d6d6d6"></div>
<div class="a" style="left:1306.0px;top:815.55px;width:144.0px;height:33.29px;background:#fbf9c7;border-left:1px solid #d6d6d6"></div>
<div class="t" style="left:1306px;width:136.0px;text-align:right;top:826.01px;font-size:16px;line-height:16px;color:#1f1f1f;font-weight:400">10.84</div>
<div class="a" style="left:1450.0px;top:815.55px;width:126.5px;height:33.29px;background:#f9f9f9;border-left:1px solid #d6d6d6"></div>
<div class="a" style="left:1576.5px;top:815.55px;width:140.0px;height:33.29px;background:#f9f9f9;border-left:1px solid #d6d6d6"></div>
<div class="a" style="left:118.5px;top:382.28px;width:1598.0px;height:1px;background:#d6d6d6"></div>
<div class="a" style="left:118.5px;top:415.57px;width:1598.0px;height:1px;background:#d6d6d6"></div>
<div class="a" style="left:118.5px;top:448.86px;width:1598.0px;height:1px;background:#d6d6d6"></div>
<div class="a" style="left:118.5px;top:482.15px;width:1598.0px;height:1px;background:#d6d6d6"></div>
<div class="a" style="left:118.5px;top:515.44px;width:1598.0px;height:1px;background:#d6d6d6"></div>
<div class="a" style="left:118.5px;top:548.73px;width:1598.0px;height:1px;background:#d6d6d6"></div>
<div class="a" style="left:118.5px;top:582.02px;width:1598.0px;height:1px;background:#d6d6d6"></div>
<div class="a" style="left:118.5px;top:648.60px;width:1598.0px;height:1px;background:#d6d6d6"></div>
<div class="a" style="left:118.5px;top:681.89px;width:1598.0px;height:1px;background:#d6d6d6"></div>
<div class="a" style="left:118.5px;top:715.18px;width:1598.0px;height:1px;background:#d6d6d6"></div>
<div class="a" style="left:118.5px;top:748.47px;width:1598.0px;height:1px;background:#d6d6d6"></div>
<div class="a" style="left:118.5px;top:781.76px;width:1598.0px;height:1px;background:#d6d6d6"></div>
<div class="a" style="left:118.5px;top:815.05px;width:1598.0px;height:1px;background:#d6d6d6"></div>
<div class="a" style="left:118.5px;top:848.34px;width:1598.0px;height:1px;background:#d6d6d6"></div>
<div class="a" style="left:1716.0px;top:316.5px;width:1px;height:532.6px;background:#dcdcdc"></div>
<div class="a" style="left:1040px;top:414.8px;width:130.6px;height:34.4px;border:3px solid #9166f2;border-radius:3px"></div>
<div class="a" style="left:1040px;top:449.6px;width:130.6px;height:33.4px;border:3px solid #ee4f3c;border-radius:3px"></div>
<svg class="a" style="left:20px;top:90px" width="66" height="570" viewBox="20 90 66 570">
<path fill="#45a0e0" d="M34.6 110.6 L45.9 104.7 L57.6 110.6 V125 H49.2 V114.9 H42.8 V125 H34.6Z"/>
<rect x="35.8" y="162.7" width="20.8" height="20.6" rx="1" fill="none" stroke="#45a0e0" stroke-width="2"/>
<path d="M37.3 175.8 L45.4 170.3 L49 174.4 L56.3 164" fill="none" stroke="#45a0e0" stroke-width="1.9"/>
<rect x="34.8" y="212.3" width="22.8" height="23.2" rx="2.5" fill="#45a0e0"/>
<path d="M40.9 222.4 V231.9 M50.6 215.2 V228.8" stroke="#1b3e6b" stroke-width="1.5"/>
<ellipse cx="40.9" cy="226.5" rx="1.9" ry="2.3" fill="#1b3e6b"/>
<ellipse cx="50.6" cy="222" rx="1.9" ry="2.3" fill="#1b3e6b"/>
<path fill="#45a0e0" d="M34.8 279.1 H57.6 C56.8 283 52.5 285.3 46.2 285.3 C39.9 285.3 35.6 283 34.8 279.1Z"/>
<path fill="#45a0e0" d="M46.2 263.2 C48 264.8 48.9 266.6 48.9 268.2 C48.9 270.2 47.6 271.8 46.2 272 C44.8 271.8 43.5 270.2 43.5 268.2 C43.5 266.6 44.4 264.8 46.2 263.2Z"/>
<rect x="45.6" y="271" width="1.2" height="8.2" fill="#45a0e0"/>
<ellipse cx="40.6" cy="273.8" rx="3" ry="2.1" transform="rotate(22 40.6 273.8)" fill="#45a0e0"/>
<ellipse cx="51.8" cy="273.8" rx="3" ry="2.1" transform="rotate(-22 51.8 273.8)" fill="#45a0e0"/>
<path d="M43 275.5 L45.8 278 M49.4 275.5 L46.6 278" stroke="#45a0e0" stroke-width="1"/>
<circle cx="46.1" cy="324.4" r="10" fill="none" stroke="#45a0e0" stroke-width="2.8"/>
<path fill="#45a0e0" d="M50.9 319.8 L47.5 326 L41.2 329.5 L44.7 323.3Z"/>
<circle cx="46.05" cy="324.65" r="1" fill="#1b3e6b"/>
<circle cx="46.2" cy="375.1" r="10" fill="none" stroke="#45a0e0" stroke-width="2.8"/>
<path fill="#45a0e0" d="M46 365 A10.2 10.2 0 0 1 53.4 382.3 C50 379 47 376 46 365Z"/>
<text x="51.2" y="374.6" text-anchor="middle" font-family="Liberation Sans" font-weight="700" font-size="7.5" fill="#1b3e6b">$</text>
<circle cx="44.3" cy="423.5" r="9.2" fill="#45a0e0"/>
<path d="M50.2 430.2 L56.6 436.2" stroke="#45a0e0" stroke-width="2.6" stroke-linecap="round"/>
<path d="M35.6 425.6 L39.6 427.4 L44.5 422.2 L48.6 424.6 L52.6 419.2" fill="none" stroke="#1b3e6b" stroke-width="1.4"/>
<path fill="#45a0e0" d="M35.7 467.6 H44.3 V476 H39.6 V478.7 H36.8 V476 H35.7Z M45.2 467.2 L52.4 466.4 L54 465 H55.6 L57.2 467.6 L55.8 469 L54.2 469.6 L53 476 H51.4 V478.7 H48.6 V476 H45.2Z"/>
<rect x="36" y="520.4" width="16.6" height="16.8" rx="3" fill="none" stroke="#45a0e0" stroke-width="2"/>
<path d="M38 534 L42.7 525.5 L47.7 531.4 L50 529" fill="none" stroke="#45a0e0" stroke-width="1.3"/>
<circle cx="50.6" cy="522.4" r="7.6" fill="#1b3e6b"/>
<path fill="#45a0e0" fill-rule="evenodd" d="M49.48 517.83 L49.55 516.29 L51.65 516.29 L51.72 517.83 L53.04 518.38 L54.18 517.34 L55.66 518.82 L54.62 519.96 L55.17 521.28 L56.71 521.35 L56.71 523.45 L55.17 523.52 L54.62 524.84 L55.66 525.98 L54.18 527.46 L53.04 526.42 L51.72 526.97 L51.65 528.51 L49.55 528.51 L49.48 526.97 L48.16 526.42 L47.02 527.46 L45.54 525.98 L46.58 524.84 L46.03 523.52 L44.49 523.45 L44.49 521.35 L46.03 521.28 L46.58 519.96 L45.54 518.82 L47.02 517.34 L48.16 518.38Z M53.30 522.40 A2.7 2.7 0 1 0 47.90 522.40 A2.7 2.7 0 1 0 53.30 522.40Z"/>
<path d="M69 523.8 L76.9 527.4 L69 531Z" fill="#45a0e0"/>
<circle cx="45.9" cy="579.7" r="4.3" fill="none" stroke="#45a0e0" stroke-width="2.3"/>
<path d="M45.9 570 V575.4" stroke="#45a0e0" stroke-width="2"/>
<circle cx="45.9" cy="568.2" r="2.4" fill="#45a0e0"/>
<path d="M42.3 582.6 Q40.2 585 38.6 586.3 M49.5 582.6 Q51.6 585 53.2 586.3" fill="none" stroke="#45a0e0" stroke-width="2"/>
<circle cx="37" cy="587.5" r="2.2" fill="none" stroke="#45a0e0" stroke-width="1.6"/>
<circle cx="55.3" cy="587.5" r="2.2" fill="none" stroke="#45a0e0" stroke-width="1.6"/>
<path d="M69 574.4 L76.9 578 L69 581.6Z" fill="#45a0e0"/>
<path fill="#45a0e0" fill-rule="evenodd" d="M44.22 620.51 L44.64 617.70 L47.56 617.70 L47.98 620.51 L50.71 621.64 L52.99 619.94 L55.06 622.01 L53.36 624.29 L54.49 627.02 L57.30 627.44 L57.30 630.36 L54.49 630.78 L53.36 633.51 L55.06 635.79 L52.99 637.86 L50.71 636.16 L47.98 637.29 L47.56 640.10 L44.64 640.10 L44.22 637.29 L41.49 636.16 L39.21 637.86 L37.14 635.79 L38.84 633.51 L37.71 630.78 L34.90 630.36 L34.90 627.44 L37.71 627.02 L38.84 624.29 L37.14 622.01 L39.21 619.94 L41.49 621.64Z M51.00 628.90 A4.9 4.9 0 1 0 41.20 628.90 A4.9 4.9 0 1 0 51.00 628.90Z"/>
<path d="M69 625.2 L76.9 628.8 L69 632.4Z" fill="#45a0e0"/>
</svg></body></html>
